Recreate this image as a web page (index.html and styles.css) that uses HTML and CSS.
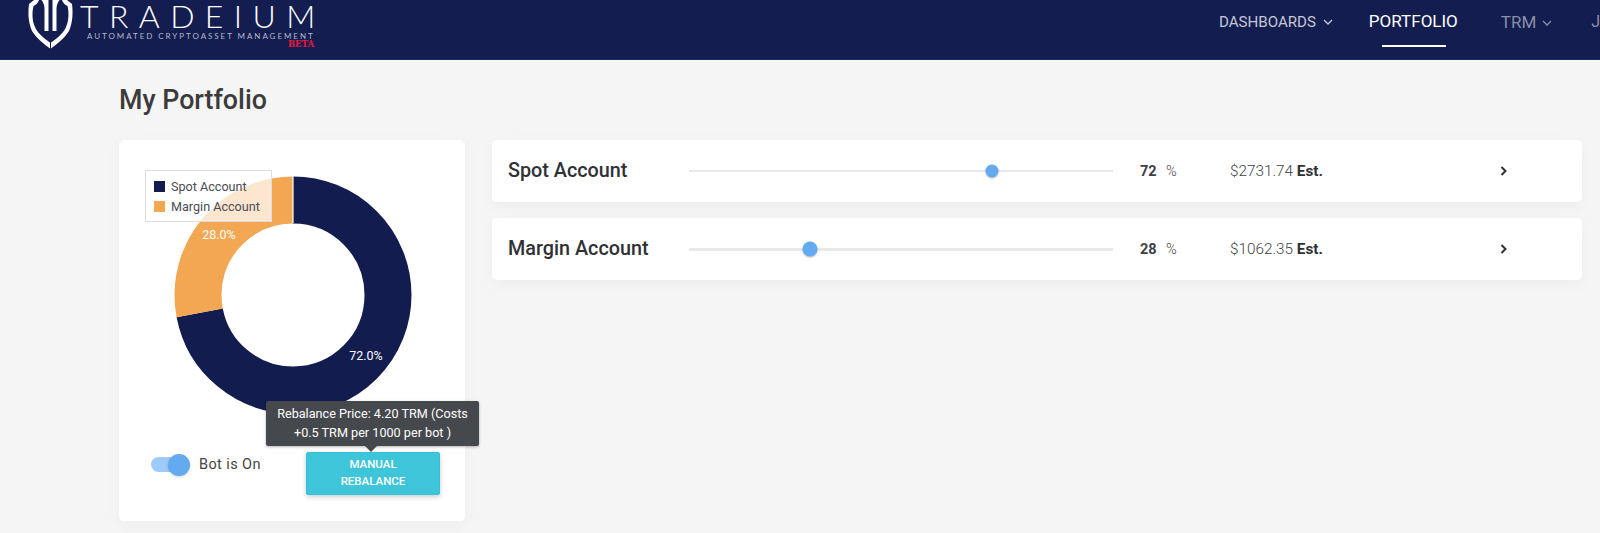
FILE: index.html
```html
<!DOCTYPE html>
<html lang="en">
<head>
<meta charset="utf-8">
<title>Tradeium - My Portfolio</title>
<link rel="stylesheet" href="styles.css">
</head>
<body>
<header class="topbar">
  <div class="brand">
    <svg class="shield" width="45" height="49" viewBox="0 0 45 49" fill="#fff">
      <g id="half">
        <path d="M6 0L1 4C0 12 0 22 4 31C9 39 16 44 22 48.500V42.500C14 37 9 32 7 27C4 21 4 12 5.500 6C8 5 10 3 11 0Z"/>
        <path d="M13.500 0H20.500V31H16.500V9C16.500 5 15.500 3 13.500 0Z"/>
      </g>
      <use href="#half" transform="matrix(-1 0 0 1 45 0)"/>
    </svg>
    <div class="wordmark">
      <div class="name">TRADEIUM</div>
      <div class="tagline">AUTOMATED CRYPTOASSET MANAGEMENT</div>
      <div class="beta">BETA</div>
    </div>
  </div>
  <nav class="nav">
    <a class="nav-item dash">DASHBOARDS
      <svg class="caret" width="10" height="6" viewBox="0 0 10 6"><path d="M1 1l4 4 4-4" fill="none" stroke="currentColor" stroke-width="1.3"/></svg>
    </a>
    <a class="nav-item active">PORTFOLIO</a>
    <a class="nav-item trm">TRM
      <svg class="caret" width="10" height="6" viewBox="0 0 10 6"><path d="M1 1l4 4 4-4" fill="none" stroke="currentColor" stroke-width="1.3"/></svg>
    </a>
    <a class="nav-item user">J</a>
  </nav>
</header>

<main class="page">
  <h1 class="title">My Portfolio</h1>
  <div class="layout">
    <section class="card chart-card">
      <div class="chart">
        <svg class="donut" width="238" height="238" viewBox="0 0 238 238">
          <g transform="rotate(-90 119 119)" fill="none" stroke-width="47">
            <circle cx="119" cy="119" r="95" stroke="#121c4e" pathLength="100" stroke-dasharray="72 28"/>
            <circle cx="119" cy="119" r="95" stroke="#f3a752" pathLength="100" stroke-dasharray="28 72" stroke-dashoffset="-72"/>
          </g>
          <path d="M119 0V47" stroke="#fff" stroke-width="1.2"/>
          <text class="pct" x="192" y="184" text-anchor="middle">72.0%</text>
          <text class="pct" x="45" y="63" text-anchor="middle">28.0%</text>
        </svg>
        <div class="legend">
          <div class="legend-row"><span class="swatch navy"></span>Spot Account</div>
          <div class="legend-row"><span class="swatch orange"></span>Margin Account</div>
        </div>
      </div>
      <div class="controls">
        <div class="bot">
          <span class="toggle"><span class="toggle-thumb"></span></span>
          <span class="bot-label">Bot is On</span>
        </div>
        <div class="rebalance">
          <div class="tooltip">Rebalance Price: 4.20 TRM (Costs +0.5 TRM per 1000 per bot )</div>
          <button class="button">MANUAL REBALANCE</button>
        </div>
      </div>
    </section>

    <div class="accounts">
      <section class="card account">
        <div class="account-name">Spot Account</div>
        <div class="slider"><span class="thumb thumb-spot"></span></div>
        <div class="percent"><b>72</b><span>%</span></div>
        <div class="value">$2731.74 <b>Est.</b></div>
        <svg class="chevron" width="8" height="10" viewBox="0 0 8 10"><path d="M1.500 1l4 4-4 4" fill="none" stroke="#2f3136" stroke-width="2"/></svg>
      </section>
      <section class="card account">
        <div class="account-name">Margin Account</div>
        <div class="slider thick"><span class="thumb thumb-margin"></span></div>
        <div class="percent"><b>28</b><span>%</span></div>
        <div class="value">$1062.35 <b>Est.</b></div>
        <svg class="chevron" width="8" height="10" viewBox="0 0 8 10"><path d="M1.500 1l4 4-4 4" fill="none" stroke="#2f3136" stroke-width="2"/></svg>
      </section>
    </div>
  </div>
</main>
</body>
</html>
```

FILE: styles.css
```css
* { box-sizing: border-box; }
html, body { margin: 0; height: 533px; overflow: hidden; }
body { background: #f5f5f5; font-family: Roboto, "Liberation Sans", sans-serif; color: #3a3a3a; }

.topbar {
  height: 60px;
  background: #131d4f;
  border-bottom: 1px solid #1d2a6a;
  display: flex;
  justify-content: space-between;
  overflow: hidden;
}
.brand { display: flex; padding-left: 28px; }
.shield { display: block; }
.wordmark { margin-left: 7px; width: 234px; position: relative; color: #fff; }
.name {
  font-family: Lato, sans-serif;
  font-weight: 300;
  font-size: 32px;
  line-height: 31px;
  letter-spacing: 10.400px;
  white-space: nowrap;
}
.tagline {
  margin-top: 1px;
  padding-left: 7px;
  font-family: Lato, sans-serif;
  font-size: 8px;
  line-height: 9px;
  letter-spacing: 1.950px;
  color: #b5b9cc;
  white-space: nowrap;
}
.beta {
  margin-top: -1px;
  text-align: right;
  font-family: "DejaVu Serif", serif;
  font-weight: 700;
  font-size: 8.500px;
  line-height: 9px;
  color: #df1740;
  -webkit-text-stroke: .2px #df1740;
}

.nav { display: flex; width: 381px; flex: none; white-space: nowrap; }
.nav-item { position: relative; padding-top: 13px; display: block; }
.dash { font-size: 15.100px; color: #c4c7d6; width: 151px; line-height: 18px; }
.active { font-size: 17px; color: #fff; width: 133px; line-height: 17px; }
.active::after {
  content: "";
  position: absolute;
  left: 13px;
  top: 45px;
  width: 64px;
  height: 2px;
  background: #fff;
}
.trm { font-size: 17px; color: #8a8fa9; width: 91px; line-height: 20px; padding-top: 12px; }
.trm .caret { margin-left: 1px; }
.user { font-size: 16px; color: #8a8fa9; line-height: 20px; padding-top: 12px; }
.caret { margin-left: 3px; vertical-align: 2px; }

.page { padding: 0 18px 0 119px; }
.title {
  margin: 0;
  height: 80px;
  padding-top: 25px;
  font-size: 26.800px;
  line-height: 30px;
  font-weight: 500;
  color: #3b3b3b;
}
.layout { display: flex; gap: 27px; align-items: flex-start; }

.card {
  background: #fff;
  border-radius: 5px;
  box-shadow: 0 4px 16px rgba(0, 0, 0, .035);
}
.chart-card { width: 346px; height: 381px; padding: 36px 0 0 2px; flex: none; }
.chart { position: relative; display: flex; justify-content: center; }
.donut { display: block; }
.pct { font-size: 12.500px; fill: #fff; }
.legend {
  position: absolute;
  left: 24px;
  top: -6px;
  width: 127px;
  height: 52px;
  padding: 5px 0 0 8px;
  background: rgba(255, 255, 255, .72);
  border: 1px solid #dedede;
  font-size: 12.600px;
  color: #4a4c55;
}
.legend-row { display: flex; align-items: center; height: 20px; white-space: nowrap; }
.swatch { width: 11px; height: 11px; margin-right: 6px; flex: none; }
.navy { background: #121c4e; }
.orange { background: #f3a752; }

.controls { display: flex; margin-top: 38px; padding-left: 30px; align-items: center; position: relative; }
.bot { display: flex; align-items: center; width: 155px; margin-bottom: 18px; }
.toggle { position: relative; display: block; width: 35px; height: 15px; border-radius: 8px; background: #9fcbfb; }
.toggle-thumb {
  position: absolute;
  right: -4px;
  top: -3.500px;
  width: 22px;
  height: 22px;
  border-radius: 50%;
  background: #64aaf0;
  box-shadow: 0 1px 3px rgba(0, 0, 0, .2);
}
.bot-label { margin-left: 13px; font-size: 14.500px; letter-spacing: .4px; color: #444; }

.rebalance { position: relative; }
.button {
  display: block;
  width: 134px;
  height: 43px;
  padding: 0 22px 2px;
  border: 1px solid #2fc3da;
  border-radius: 2px;
  background: #3ec5d9;
  color: #fff;
  font: 500 11.500px/17px Roboto, sans-serif;
  box-shadow: 0 2px 5px rgba(0, 0, 0, .2);
}
.tooltip {
  position: absolute;
  left: -40px;
  bottom: 49px;
  width: 213px;
  height: 45px;
  padding: 3px 6px;
  background: #45484c;
  border-radius: 2px;
  color: #fff;
  font-size: 12.650px;
  line-height: 19px;
  text-align: center;
  box-shadow: 0 1px 3px rgba(0, 0, 0, .3);
}
.tooltip::after {
  content: "";
  position: absolute;
  left: 99px;
  top: 100%;
  border: 6px solid transparent;
  border-bottom: 0;
  border-top-color: #45484c;
}

.accounts { flex: 1; display: flex; flex-direction: column; gap: 16px; min-width: 0; }
.account { height: 62px; display: flex; align-items: center; padding-left: 16px; }
.account-name { width: 181px; flex: none; padding-bottom: 2px; font-size: 19.800px; font-weight: 500; color: #303136; white-space: nowrap; }
.slider { position: relative; width: 424px; height: 2px; flex: none; background: #e8e8e8; }
.slider.thick { height: 3px; }
.thumb {
  position: absolute;
  top: 50%;
  border-radius: 50%;
  background: #64aaf0;
  box-shadow: 0 1px 2px rgba(0, 0, 0, .25);
  transform: translate(-50%, -50%);
}
.thumb-spot { left: 303px; width: 13px; height: 13px; }
.thumb-margin { left: 121px; width: 15px; height: 15px; }
.percent { width: 90px; margin-left: 27px; flex: none; font-size: 14.500px; display: flex; }
.percent b { font-weight: 700; color: #3d3f45; width: 26px; }
.percent span { font-weight: 300; color: #444; }
.value { width: 270px; flex: none; font-size: 15.300px; font-weight: 300; color: #3d3f45; }
.value b { font-weight: 700; color: #303136; }
.chevron { flex: none; }
```
